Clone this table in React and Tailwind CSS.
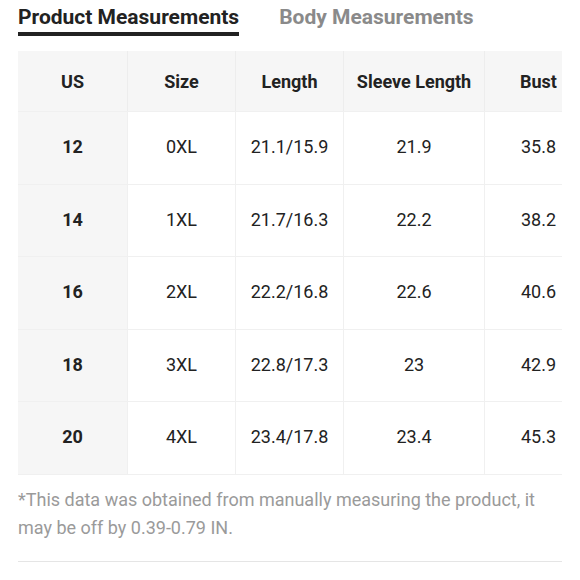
export default function App() {
  const cols = [
    { label: "US", w: "w-[109px]" },
    { label: "Size", w: "w-[108px]" },
    { label: "Length", w: "w-[108px]" },
    { label: "Sleeve Length", w: "w-[141px]" },
    { label: "Bust", w: "w-[108px]" },
  ];
  const rows = [
    ["12", "0XL", "21.1/15.9", "21.9", "35.8"],
    ["14", "1XL", "21.7/16.3", "22.2", "38.2"],
    ["16", "2XL", "22.2/16.8", "22.6", "40.6"],
    ["18", "3XL", "22.8/17.3", "23", "42.9"],
    ["20", "4XL", "23.4/17.8", "23.4", "45.3"],
  ];
  return (
    <div className="w-[580px] h-[580px] bg-white px-[18px] font-['Roboto',sans-serif] overflow-hidden">
      <div className="flex items-start gap-[40px] pt-[3px] h-[51px]">
        <div className="flex flex-col">
          <span className="text-[21px] leading-[28px] font-bold text-[#222]">Product Measurements</span>
          <span className="mt-[1px] h-[4px] w-full bg-[#222]"></span>
        </div>
        <span className="text-[21px] leading-[28px] font-bold text-[#8a8a8a]">Body Measurements</span>
      </div>
      <div className="w-[544px] overflow-hidden">
        <div className="flex w-max bg-[#f6f6f6]">
          {cols.map((c, i) => (
            <div
              key={i}
              className={`${c.w} h-[60px] shrink-0 flex items-center justify-center text-[18px] font-bold text-[#222] ${i > 0 ? "border-l border-[#ededed]" : ""}`}
            >
              {c.label}
            </div>
          ))}
        </div>
        {rows.map((r, ri) => (
          <div key={ri} className="flex w-max border-t border-[#f0f0f0]">
            {r.map((v, i) => (
              <div
                key={i}
                className={`${cols[i].w} h-[71.5px] shrink-0 flex items-center justify-center pb-[2px] text-[18px] text-[#222] ${i === 0 ? "bg-[#f6f6f6] font-bold" : "bg-white border-l border-[#f0f0f0]"}`}
              >
                {v}
              </div>
            ))}
          </div>
        ))}
        <div className="border-t border-[#f0f0f0]"></div>
      </div>
      <p className="mt-[11px] text-[18px] leading-[28px] text-[#9a9a9a] w-[544px]">
        *This data was obtained from manually measuring the product, it may be off by 0.39-0.79 IN.
      </p>
      <div className="mt-[19px] border-t border-[#e5e5e5] w-[544px]"></div>
    </div>
  );
}
